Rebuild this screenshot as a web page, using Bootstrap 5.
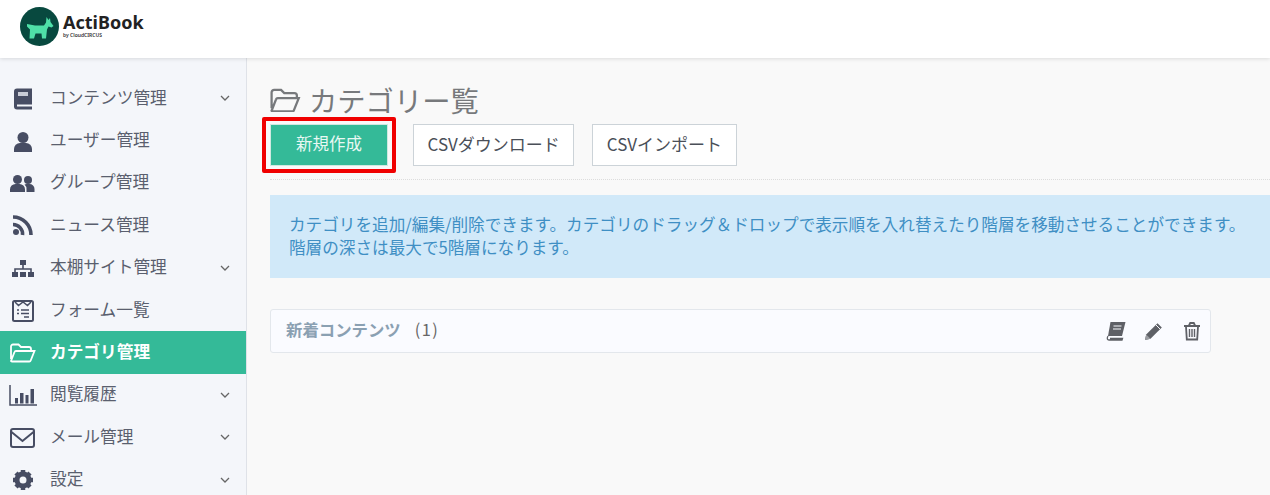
<!DOCTYPE html>
<html lang="ja">
<head>
    <meta charset="UTF-8">
    <meta name="viewport" content="width=device-width, initial-scale=1.0">
    <title>カテゴリ一覧</title>
    <link href="https://cdn.jsdelivr.net/npm/bootstrap@5.3.0/dist/css/bootstrap.min.css" rel="stylesheet">
    <style>
        html, body {
            height: 100%;
            overflow: hidden;
        }
        body {
            background-color: #f9f9f9;
            font-family: "Noto Sans CJK JP", "Noto Sans", sans-serif;
            color: #555b6b;
        }
        .top-bar {
            height: 58px;
            background: #fff;
            box-shadow: 0 1px 4px rgba(0, 0, 0, 0.12);
            padding: 0 0 5px 20px;
            position: relative;
        }
        .brand-name {
            font-family: "Noto Sans", sans-serif;
            font-size: 18px;
            font-weight: 700;
            line-height: 20px;
            color: #222;
        }
        .brand-sub {
            font-family: "Noto Sans", sans-serif;
            font-size: 5px;
            line-height: 6px;
            color: #333;
            font-weight: 600;
        }
        .brand-box {
            margin-bottom: 3px;
        }
        .side-menu {
            width: 247px;
            height: 437px;
            background: #f4f6fa;
            border-right: 1px solid #dfe2e8;
            padding-top: 19px;
            flex-shrink: 0;
        }
        .side-item {
            height: 42.4px;
            padding: 0 16px 0 10px;
            font-size: 16.7px;
            color: #5a5f6e;
            text-decoration: none;
        }
        .side-item.now {
            background: #34ba98;
            color: #fff;
            font-weight: 700;
        }
        .side-ico {
            width: 26px;
            height: 24px;
            margin-right: 14px;
            flex-shrink: 0;
            color: #474d63;
            overflow: visible;
        }
        .now .side-ico {
            color: #fff;
        }
        .side-text {
            flex-grow: 1;
            margin-bottom: 2px;
        }
        .main-area {
            padding: 25px 0 0 23px;
            min-width: 0;
        }
        .page-ttl {
            font-size: 28.3px;
            line-height: 34px;
            font-weight: 400;
            color: #77797c;
            margin: 0 0 7px;
        }
        .btn-line {
            gap: 18px;
            padding-bottom: 13px;
            border-bottom: 1px dotted #dcdcdc;
            align-items: flex-start;
        }
        .btn-plain {
            height: 42px;
            background: #fff;
            border: 1px solid #ccd3d8;
            border-radius: 0;
            font-size: 17px;
            color: #4a4f58;
            padding: 0 13.5px 3px;
        }
        .btn-new {
            width: 118px;
            height: 42px;
            background: #34ba98;
            border: 1px solid #cfe9e1;
            border-radius: 0;
            color: #e8f8f3;
            font-size: 16.5px;
            margin-right: 7px;
            padding: 0 0 3px;
            position: relative;
        }
        .btn-new:hover {
            background: #34ba98;
            color: #e8f8f3;
        }
        .btn-new::after {
            content: "";
            position: absolute;
            inset: -8px -9px;
            border: 4px solid #f00000;
            border-radius: 2px;
        }
        .info-box {
            margin-top: 15px;
            height: 83px;
            background: #d1e9f9;
            color: #3f8fc4;
            font-size: 16.63px;
            line-height: 23px;
            padding: 18px 19px 0;
            white-space: nowrap;
        }
        .cat-row {
            margin-top: 31px;
            width: 941px;
            height: 44px;
            background: #fafbff;
            border: 1px solid #e3e7ec;
            border-radius: 3px;
            padding: 0 8px 0 15px;
            font-size: 16.4px;
        }
        .cat-name {
            color: #8aa0b2;
            font-weight: 700;
            margin-bottom: 3px;
        }
        .cat-count {
            color: #666;
            margin: 0 0 3px 14px;
            letter-spacing: 1.500px;
        }
        .cat-ico {
            width: 20px;
            height: 20px;
            margin-left: 18px;
            color: #5e6066;
        }
    </style>
</head>
<body>
    <header class="top-bar d-flex align-items-center">
        <svg width="39" height="39" viewBox="0 0 39 39" class="me-1">
            <circle cx="19.500" cy="19.500" r="19.500" fill="#08493f"/>
            <path d="M7 17l8 1.500h9l2-3 .5-5.500 2 3 1.500-2 .5 4 3 4-2 1.500-3-1-1.500 3-1 9h-4l-.5-5h-6l-1.500 5H9.500l.5-9-3-3z" fill="#4fe0a8"/>
        </svg>
        <div class="brand-box">
            <div class="brand-name">ActiBook</div>
            <div class="brand-sub">by CloudCIRCUS</div>
        </div>
    </header>
    <div class="d-flex">
        <nav class="side-menu">
            <a class="side-item d-flex align-items-center" href="#">
                <svg class="side-ico" viewBox="0 0 26 24"><path d="M4 5.500A3 3 0 0 1 7 2.500h15v21H7a3 3 0 0 1-3-3z" fill="currentColor"/><rect x="8" y="6" width="10" height="4" fill="#c9ccd6"/><rect x="7" y="18.500" width="15" height="2" fill="#f4f6fa"/></svg>
                <span class="side-text">コンテンツ管理</span>
                <svg width="10" height="6" viewBox="0 0 10 6"><path d="M1 1l4 4 4-4" fill="none" stroke="#666" stroke-width="1.300"/></svg>
            </a>
            <a class="side-item d-flex align-items-center" href="#">
                <svg class="side-ico" viewBox="0 0 26 24"><circle cx="13" cy="8.500" r="5.500" fill="currentColor"/><path d="M4 23v-3a6 6 0 0 1 6-6h6a6 6 0 0 1 6 6v3z" fill="currentColor"/></svg>
                <span class="side-text">ユーザー管理</span>
            </a>
            <a class="side-item d-flex align-items-center" href="#">
                <svg class="side-ico" viewBox="0 0 26 24"><circle cx="7.500" cy="8.500" r="4.500" fill="currentColor"/><circle cx="18" cy="9" r="4" fill="currentColor"/><path d="M0 21v-2.500a5.500 5.500 0 0 1 5.500-5.500h4a5.500 5.500 0 0 1 5.500 5.500V21z" fill="currentColor"/><path d="M16.500 21v-3a6 6 0 0 0-2-4.500 5 5 0 0 1 2-.5h3a5 5 0 0 1 5 5v3z" fill="currentColor"/></svg>
                <span class="side-text">グループ管理</span>
            </a>
            <a class="side-item d-flex align-items-center" href="#">
                <svg class="side-ico" viewBox="0 0 26 24"><circle cx="6" cy="19" r="3" fill="currentColor"/><path d="M3 11.500a9.500 9.500 0 0 1 9.500 10.500M3 4a18 18 0 0 1 18 18" fill="none" stroke="currentColor" stroke-width="3.600"/></svg>
                <span class="side-text">ニュース管理</span>
            </a>
            <a class="side-item d-flex align-items-center" href="#">
                <svg class="side-ico" viewBox="0 0 26 24"><rect x="10" y="4" width="6" height="5" fill="currentColor"/><path d="M13 9v4M5 16v-3h16v3" fill="none" stroke="currentColor" stroke-width="1.600"/><rect x="2" y="16" width="6" height="5" fill="currentColor"/><rect x="10" y="16" width="6" height="5" fill="currentColor"/><rect x="18" y="16" width="6" height="5" fill="currentColor"/></svg>
                <span class="side-text">本棚サイト管理</span>
                <svg width="10" height="6" viewBox="0 0 10 6"><path d="M1 1l4 4 4-4" fill="none" stroke="#666" stroke-width="1.300"/></svg>
            </a>
            <a class="side-item d-flex align-items-center" href="#">
                <svg class="side-ico" viewBox="0 0 26 24"><rect x="3" y="3" width="20" height="20" rx="1.500" fill="none" stroke="currentColor" stroke-width="2"/><path d="M5 4l3.500 3.500L13 4l4.500 3.500L21 4" fill="none" stroke="currentColor" stroke-width="1.500"/><path d="M7 12h2M11 12h8M7 15.500h2M11 15.500h8M14 19h5" stroke="currentColor" stroke-width="1.600"/></svg>
                <span class="side-text">フォーム一覧</span>
            </a>
            <a class="side-item now d-flex align-items-center" href="#">
                <svg class="side-ico" viewBox="0 0 26 24"><path d="M1 18V5.500a2 2 0 0 1 2-2h5.500L11 6h8a2 2 0 0 1 2 2v2M1 20l3.500-9a1.500 1.500 0 0 1 1.500-1h18.500l-3.800 9.500a1.500 1.500 0 0 1-1.500 1H2.500A1.500 1.500 0 0 1 1 20z" fill="none" stroke="currentColor" stroke-width="1.800"/></svg>
                <span class="side-text">カテゴリ管理</span>
            </a>
            <a class="side-item d-flex align-items-center" href="#">
                <svg class="side-ico" viewBox="0 0 26 24"><path d="M0 2v20h27" fill="none" stroke="currentColor" stroke-width="1.500"/><rect x="5" y="15" width="3" height="5.500" fill="currentColor"/><rect x="10" y="10" width="3.500" height="10.500" fill="currentColor"/><rect x="15.500" y="12" width="3" height="8.500" fill="currentColor"/><rect x="20.500" y="6" width="3.500" height="14.500" fill="currentColor"/></svg>
                <span class="side-text">閲覧履歴</span>
                <svg width="10" height="6" viewBox="0 0 10 6"><path d="M1 1l4 4 4-4" fill="none" stroke="#666" stroke-width="1.300"/></svg>
            </a>
            <a class="side-item d-flex align-items-center" href="#">
                <svg class="side-ico" viewBox="0 0 26 24"><rect x="1" y="4" width="23" height="18" rx="2" fill="none" stroke="currentColor" stroke-width="2"/><path d="M1.500 7l11 9 11-9" fill="none" stroke="currentColor" stroke-width="2"/></svg>
                <span class="side-text">メール管理</span>
                <svg width="10" height="6" viewBox="0 0 10 6"><path d="M1 1l4 4 4-4" fill="none" stroke="#666" stroke-width="1.300"/></svg>
            </a>
            <a class="side-item d-flex align-items-center" href="#">
                <svg class="side-ico" viewBox="0 0 26 24"><circle cx="13" cy="12" r="6" fill="none" stroke="currentColor" stroke-width="5"/><path d="M13 2v20M3 12h20M6 5l14 14M20 5L6 19" stroke="currentColor" stroke-width="4.500" stroke-dasharray="3.500 13 3.500 13"/></svg>
                <span class="side-text">設定</span>
                <svg width="10" height="6" viewBox="0 0 10 6"><path d="M1 1l4 4 4-4" fill="none" stroke="#666" stroke-width="1.300"/></svg>
            </a>
        </nav>
        <main class="main-area flex-grow-1">
            <h1 class="page-ttl d-flex align-items-center">
                <svg width="31" height="24" viewBox="0 2 24 19" class="me-2"><path d="M1 18V5.500a2 2 0 0 1 2-2h5.500L11 6h8a2 2 0 0 1 2 2v2M1 20l3.500-9a1.500 1.500 0 0 1 1.500-1h16.500l-3.800 9.500a1.500 1.500 0 0 1-1.500 1H2.500A1.500 1.500 0 0 1 1 20z" fill="none" stroke="currentColor" stroke-width="1.800"/></svg>
                カテゴリー覧
            </h1>
            <div class="btn-line d-flex">
                <button type="button" class="btn btn-new">新規作成</button>
                <button type="button" class="btn btn-plain">CSVダウンロード</button>
                <button type="button" class="btn btn-plain">CSVインポート</button>
            </div>
            <div class="info-box">
                カテゴリを追加/編集/削除できます。カテゴリのドラッグ＆ドロップで表示順を入れ替えたり階層を移動させることができます。<br>
                階層の深さは最大で5階層になります。
            </div>
            <div class="cat-row d-flex align-items-center">
                <span class="cat-name">新着コンテンツ</span>
                <span class="cat-count flex-grow-1">(1)</span>
                <svg class="cat-ico" viewBox="0 0 20 20"><path d="M4.500 1h15l-3.500 14H2z" fill="currentColor"/><path d="M2 15c-1.500 2.500-.5 4 1 4h13l.5-1.500H4" fill="none" stroke="currentColor" stroke-width="1.300"/><path d="M7.500 5h8M7 8h8" stroke="#fafbff" stroke-width="1.200"/></svg>
                <svg class="cat-ico" viewBox="0 0 20 20"><path d="M1 19l1.200-5.500L13.500 2.200l4.300 4.300L6.500 17.800z" fill="currentColor"/><path d="M12 4l4.300 4.300" stroke="#fafbff" stroke-width="1"/><path d="M1 19l1.200-5.500 4.300 4.300z" fill="#9a9ca1"/></svg>
                <svg class="cat-ico" viewBox="0 0 20 20"><path d="M2 5h16M7 4.500L8.200 2h3.600L13 4.500" fill="none" stroke="currentColor" stroke-width="1.800"/><path d="M4 5.500l.8 13h10.400l.8-13" fill="none" stroke="currentColor" stroke-width="1.800"/><path d="M7.500 8v8M10 8v8M12.500 8v8" stroke="currentColor" stroke-width="1.400"/></svg>
            </div>
        </main>
    </div>
    <script src="https://cdn.jsdelivr.net/npm/bootstrap@5.3.0/dist/js/bootstrap.bundle.min.js"></script>
</body>
</html>
